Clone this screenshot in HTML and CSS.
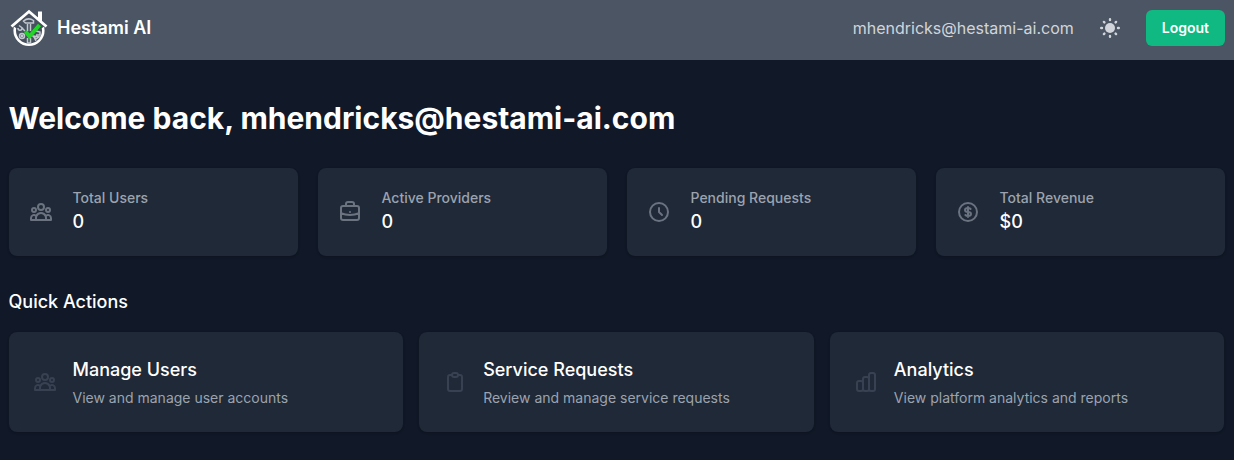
FILE: index.html
```html
<!DOCTYPE html>
<html lang="en">
<head>
<meta charset="utf-8">
<title>Hestami AI</title>
<link rel="stylesheet" href="styles.css">
</head>
<body>
<header class="topbar">
  <div class="brand">
    <svg class="logo" viewBox="0 0 40 40" fill="none">
      <circle cx="20" cy="22.500" r="14.300" fill="#46505e" stroke="#fff" stroke-width="2.600"/>
      <path d="M4 18 20 4l16 14-3 2H7z" fill="#46505e"/>
      <path d="M29 3.500h4V15l-4-4z" fill="#fff"/>
      <path d="M2.500 18.500 20 3.500l17.500 15" stroke="#fff" stroke-width="2.800"/>
      <g stroke="#c3c8cf" stroke-width="1.500">
        <path d="M14.500 13c3-2.500 7-2.500 10-.5v2.500h-8zM18.500 16v7M21.500 16v7M9 20c0 3 4 3 4 0l3 3M10 17.500l4 3M24 28l6 1-3 2zM27 23l4 1v3h-4M18.500 30v5h3v-5M25 29l2 4"/>
        <circle cx="13" cy="28" r="2.500"/>
        <circle cx="13" cy="28" r=".7"/>
      </g>
      <path d="m16.500 23.500 4 5L30.500 17" stroke="#20d626" stroke-width="3.800"/>
    </svg>
    <span class="brand-name">Hestami AI</span>
  </div>
  <div class="account">
    <span class="email">mhendricks@hestami-ai.com</span>
    <svg class="sun" viewBox="0 0 24 24">
      <circle cx="12" cy="12" r="5" fill="currentColor"/>
      <path d="M12 3.200v.8M12 20v.8M3.200 12H4M20 12h.8M5.900 5.900l.5.500M17.600 17.600l.5.500M5.900 18.100l.5-.5M17.600 6.400l.5-.5" stroke="currentColor" stroke-width="2.400" stroke-linecap="round"/>
    </svg>
    <button class="logout">Logout</button>
  </div>
</header>
<main class="page">
  <h1 class="welcome">Welcome back, mhendricks@hestami-ai.com</h1>
  <section class="stats">
    <div class="card stat">
      <svg class="icon" viewBox="0 0 24 24"><path d="M17 20h5v-2a3 3 0 00-5.356-1.857M17 20H7m10 0v-2c0-.656-.126-1.283-.356-1.857M7 20H2v-2a3 3 0 015.356-1.857M7 20v-2c0-.656.126-1.283.356-1.857m0 0a5.002 5.002 0 019.288 0M15 7a3 3 0 11-6 0 3 3 0 016 0zm6 3a2 2 0 11-4 0 2 2 0 014 0zM7 10a2 2 0 11-4 0 2 2 0 014 0z"/></svg>
      <div><div class="label">Total Users</div><div class="value">0</div></div>
    </div>
    <div class="card stat">
      <svg class="icon" viewBox="0 0 24 24"><path d="M21 13.255A23.931 23.931 0 0112 15c-3.183 0-6.22-.62-9-1.745M16 6V4a2 2 0 00-2-2h-4a2 2 0 00-2 2v2m4 6h.01M5 20h14a2 2 0 002-2V8a2 2 0 00-2-2H5a2 2 0 00-2 2v10a2 2 0 002 2z"/></svg>
      <div><div class="label">Active Providers</div><div class="value">0</div></div>
    </div>
    <div class="card stat">
      <svg class="icon" viewBox="0 0 24 24"><path d="M12 8v4l3 3m6-3a9 9 0 11-18 0 9 9 0 0118 0z"/></svg>
      <div><div class="label">Pending Requests</div><div class="value">0</div></div>
    </div>
    <div class="card stat">
      <svg class="icon" viewBox="0 0 24 24"><path d="M12 8c-1.657 0-3 .895-3 2s1.343 2 3 2 3 .895 3 2-1.343 2-3 2m0-8c1.11 0 2.08.402 2.599 1M12 8V7m0 1v8m0 0v1m0-1c-1.11 0-2.08-.402-2.599-1M21 12a9 9 0 11-18 0 9 9 0 0118 0z"/></svg>
      <div><div class="label">Total Revenue</div><div class="value">$0</div></div>
    </div>
  </section>
  <h2 class="section-title">Quick Actions</h2>
  <section class="actions">
    <div class="card action">
      <svg class="icon" viewBox="0 0 24 24"><path d="M17 20h5v-2a3 3 0 00-5.356-1.857M17 20H7m10 0v-2c0-.656-.126-1.283-.356-1.857M7 20H2v-2a3 3 0 015.356-1.857M7 20v-2c0-.656.126-1.283.356-1.857m0 0a5.002 5.002 0 019.288 0M15 7a3 3 0 11-6 0 3 3 0 016 0zm6 3a2 2 0 11-4 0 2 2 0 014 0zM7 10a2 2 0 11-4 0 2 2 0 014 0z"/></svg>
      <div><h3 class="action-title">Manage Users</h3><p class="action-text">View and manage user accounts</p></div>
    </div>
    <div class="card action">
      <svg class="icon" viewBox="0 0 24 24"><path d="M9 5H7a2 2 0 00-2 2v12a2 2 0 002 2h10a2 2 0 002-2V7a2 2 0 00-2-2h-2M9 5a2 2 0 002 2h2a2 2 0 002-2M9 5a2 2 0 012-2h2a2 2 0 012 2"/></svg>
      <div><h3 class="action-title">Service Requests</h3><p class="action-text">Review and manage service requests</p></div>
    </div>
    <div class="card action">
      <svg class="icon" viewBox="0 0 24 24"><path d="M9 19v-6a2 2 0 00-2-2H5a2 2 0 00-2 2v6a2 2 0 002 2h2a2 2 0 002-2zm0 0V9a2 2 0 012-2h2a2 2 0 012 2v10m-6 0a2 2 0 002 2h2a2 2 0 002-2m0 0V5a2 2 0 012-2h2a2 2 0 012 2v14a2 2 0 01-2 2h-2a2 2 0 01-2-2z"/></svg>
      <div><h3 class="action-title">Analytics</h3><p class="action-text">View platform analytics and reports</p></div>
    </div>
  </section>
</main>
</body>
</html>
```
FILE: styles.css
```css
* { box-sizing: border-box; }
body {
  margin: 0;
  min-height: 100vh;
  background: #111827;
  color: #fff;
  font-family: Inter, "Liberation Sans", sans-serif;
}
h1, h2, h3, p { margin: 0; }
.topbar {
  height: 60px;
  padding: 0 9px 4px;
  display: flex;
  align-items: center;
  justify-content: space-between;
  background: #4b5563;
}
.brand { display: flex; align-items: center; gap: 8px; }
.logo { width: 40px; height: 40px; }
.brand-name { font-size: 18px; font-weight: 600; line-height: 28px; }
.account { display: flex; align-items: center; }
.email { color: #d1d5db; font-size: 16px; line-height: 24px; }
.sun { width: 24px; height: 24px; margin: 0 24px; color: #d1d5db; }
.logout {
  height: 36px;
  padding: 0 16px;
  border: 0;
  border-radius: 6px;
  background: #10b981;
  color: #fff;
  font: 600 14px/20px Inter, sans-serif;
}
.page { padding: 40px 9.5px 0 8.5px; }
.welcome { font-size: 30px; font-weight: 700; line-height: 36px; }
.stats { display: grid; grid-template-columns: repeat(4, 1fr); gap: 20px; margin-top: 32px; }
.card {
  display: flex;
  align-items: center;
  border-radius: 8px;
  background: #1f2937;
  box-shadow: 0 1px 3px rgba(0, 0, 0, .1), 0 1px 2px rgba(0, 0, 0, .1);
}
.stat { height: 88px; padding: 0 20px; gap: 20px; }
.icon {
  flex: none;
  width: 24px;
  height: 24px;
  fill: none;
  stroke: #6b7280;
  stroke-width: 2;
  stroke-linecap: round;
  stroke-linejoin: round;
}
.label { color: #9ca3af; font-size: 14px; font-weight: 500; line-height: 20px; }
.value { font-size: 18px; font-weight: 550; line-height: 28px; }
.section-title { margin-top: 32px; font-size: 18px; font-weight: 550; line-height: 28px; }
.actions { display: grid; grid-template-columns: repeat(3, 1fr); gap: 16px; margin-top: 16px; }
.action { height: 100px; padding: 0 24px; gap: 16px; }
.action .icon { stroke: #374151; }
.action-title { font-size: 18px; font-weight: 500; line-height: 28px; }
.action-text { margin-top: 4px; color: #9ca3af; font-size: 14px; line-height: 20px; }
```
